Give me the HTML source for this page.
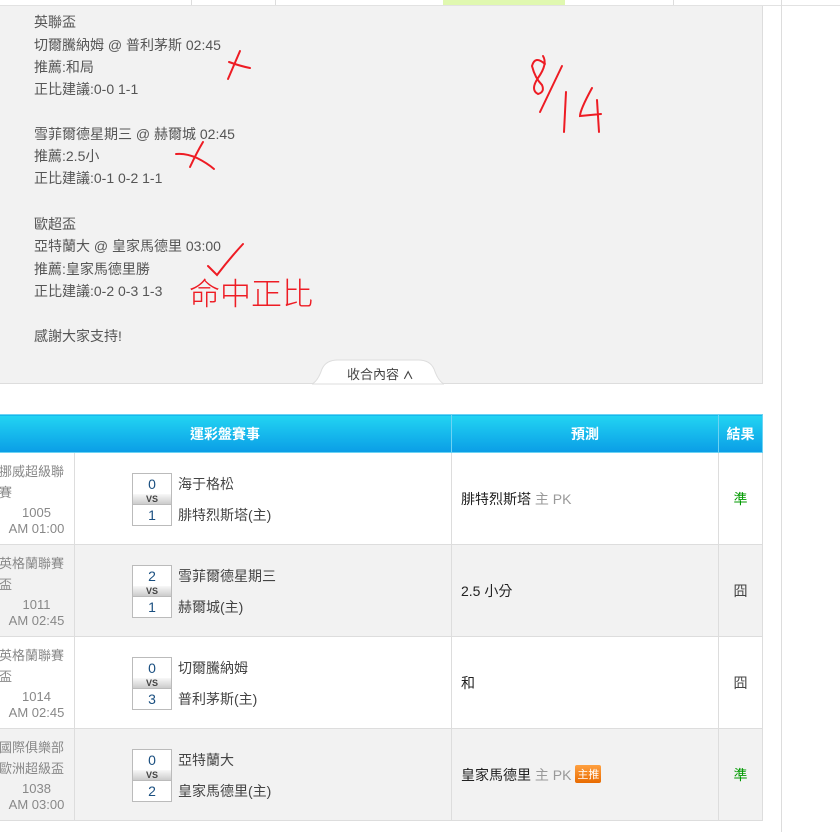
<!DOCTYPE html>
<html><head><meta charset="utf-8"><style>
body{margin:0;width:840px;height:832px;background:#fff;position:relative;overflow:hidden;font-family:"Liberation Sans","Noto Sans CJK TC",sans-serif;}
.a{position:absolute}
.t{position:absolute;left:34px;font-size:14px;color:#555;line-height:22px;white-space:nowrap}
table{position:absolute;left:-2px;top:414px;border-collapse:collapse;width:765px;}
td,th{border:1px solid #ddd;padding:0;}
th{height:37px;color:#fff;font-size:14px;font-weight:bold;background:linear-gradient(#22d4f2,#0a9de6);border-color:#6dd3f3;}
td{height:91px;font-size:14px;color:#222}
tr.g td{background:#f2f2f2}
.lg{color:#888;font-size:13px;line-height:21px;}
.nm{line-height:16px;margin-top:2px}
.sc{position:absolute;left:57px;width:38px;border:1px solid #bbb;background:#fff;text-align:center;color:#1a4f80;font-size:14px;}
.vs{position:absolute;left:57px;width:38px;height:10px;border:1px solid #bbb;border-top:none;border-bottom:none;background:linear-gradient(#f8f8f8,#ccc);font-size:9px;line-height:10px;text-align:center;color:#444;font-weight:bold}
.tm{position:absolute;left:103px;color:#444;font-size:14px}
.gr{color:#999}
</style></head><body>
<div class="a" style="left:0;top:0;width:840px;height:5px;background:#fff;border-bottom:1px solid #e2e2e2"></div>
<div class="a" style="left:443px;top:0;width:122px;height:5px;background:#e0f8b0"></div>
<div class="a" style="left:191px;top:0;width:1px;height:5px;background:#ddd"></div>
<div class="a" style="left:275px;top:0;width:1px;height:5px;background:#ddd"></div>
<div class="a" style="left:673px;top:0;width:1px;height:5px;background:#ddd"></div>
<div class="a" style="left:781px;top:0;width:1px;height:832px;background:#ddd"></div>
<div class="a" style="left:0;top:6px;width:762px;height:377px;background:#f2f2f2;border-right:1px solid #ddd;border-bottom:1px solid #ddd"></div>
<div class="t" style="top:11px">英聯盃</div>
<div class="t" style="top:34px">切爾騰納姆 @ 普利茅斯 02:45</div>
<div class="t" style="top:56px">推薦:和局</div>
<div class="t" style="top:78px">正比建議:0-0 1-1</div>
<div class="t" style="top:123px">雪菲爾德星期三 @ 赫爾城 02:45</div>
<div class="t" style="top:145px">推薦:2.5小</div>
<div class="t" style="top:167px">正比建議:0-1 0-2 1-1</div>
<div class="t" style="top:213px">歐超盃</div>
<div class="t" style="top:235px">亞特蘭大 @ 皇家馬德里 03:00</div>
<div class="t" style="top:258px">推薦:皇家馬德里勝</div>
<div class="t" style="top:280px">正比建議:0-2 0-3 1-3</div>
<div class="t" style="top:325px">感謝大家支持!</div>
<div class="a" style="left:189px;top:272px;font-size:31px;color:#ee1c24;line-height:40px;font-family:'Noto Sans CJK TC',sans-serif;font-weight:300">命中正比</div>
<svg class="a" style="left:0;top:0" width="780" height="400" fill="none" stroke="#ee1c24" stroke-width="2" stroke-linecap="round">
<path d="M240 51 L228 79 M229 62 Q240 66 250 68"/>
<path d="M176 154 Q186 153 197 158 Q207 163 214 169 M203 142 Q197 152 190 167"/>
<path d="M208 266 Q217 275 217 275 Q230 258 243 244"/>
<path d="M545 64 Q535 55 532 66 Q535 78 542 85 Q545 92 538 94 Q530 90 538 78 Q548 64 543 56"/>
<path d="M562 66 L540 112"/>
<path d="M566 92 L564 132 M592 88 Q580 110 580 116 L601 114 M597 100 L599 132"/>
</svg>
<svg class="a" style="left:312px;top:359px" width="132" height="26"><path d="M0 25 Q6 22 10 10 Q14 1 26 1 L106 1 Q118 1 122 10 Q126 22 132 25 Z" fill="#fff" stroke="#ddd"/></svg>
<div class="a" style="left:347px;top:364px;font-size:13px;color:#444">收合內容 <b style="font-size:11px">&#x2227;</b></div>
<table>
<tr><th colspan="2">運彩盤賽事</th><th style="width:266px">預測</th><th>結果</th></tr>
<tr><td class="lg" style="text-align:center;width:75px"><div style="text-align:left">挪威超級聯賽</div><div class="nm">1005<br>AM 01:00</div></td>
<td style="width:376px"><div style="position:relative;height:91px"><div class="sc" style="top:20px;height:20px;line-height:20px">0</div><div class="vs" style="top:41px">VS</div><div class="sc" style="top:51px;height:20px;line-height:20px">1</div><div class="tm" style="top:21px">海于格松</div><div class="tm" style="top:52px">腓特烈斯塔(主)</div></div></td>
<td style="padding-left:9px">腓特烈斯塔 <span class="gr">主 PK</span></td><td style="text-align:center;color:#090">準</td></tr>
<tr class="g"><td class="lg" style="text-align:center"><div style="text-align:left">英格蘭聯賽盃</div><div class="nm">1011<br>AM 02:45</div></td>
<td><div style="position:relative;height:91px"><div class="sc" style="top:20px;height:20px;line-height:20px">2</div><div class="vs" style="top:41px">VS</div><div class="sc" style="top:51px;height:20px;line-height:20px">1</div><div class="tm" style="top:21px">雪菲爾德星期三</div><div class="tm" style="top:52px">赫爾城(主)</div></div></td>
<td style="padding-left:9px">2.5 小分</td><td style="text-align:center;color:#444">囧</td></tr>
<tr><td class="lg" style="text-align:center"><div style="text-align:left">英格蘭聯賽盃</div><div class="nm">1014<br>AM 02:45</div></td>
<td><div style="position:relative;height:91px"><div class="sc" style="top:20px;height:20px;line-height:20px">0</div><div class="vs" style="top:41px">VS</div><div class="sc" style="top:51px;height:20px;line-height:20px">3</div><div class="tm" style="top:21px">切爾騰納姆</div><div class="tm" style="top:52px">普利茅斯(主)</div></div></td>
<td style="padding-left:9px">和</td><td style="text-align:center;color:#444">囧</td></tr>
<tr class="g"><td class="lg" style="text-align:center"><div style="text-align:left">國際俱樂部歐洲超級盃</div><div class="nm">1038<br>AM 03:00</div></td>
<td><div style="position:relative;height:91px"><div class="sc" style="top:20px;height:20px;line-height:20px">0</div><div class="vs" style="top:41px">VS</div><div class="sc" style="top:51px;height:20px;line-height:20px">2</div><div class="tm" style="top:21px">亞特蘭大</div><div class="tm" style="top:52px">皇家馬德里(主)</div></div></td>
<td style="padding-left:9px">皇家馬德里 <span class="gr">主 PK</span> <span style="display:inline-block;background:linear-gradient(#ffa040,#e86a00);color:#fff;font-size:11px;padding:1px 2px;border-radius:2px;vertical-align:2px">主推</span></td><td style="text-align:center;color:#090">準</td></tr>
</table>
</body></html>
